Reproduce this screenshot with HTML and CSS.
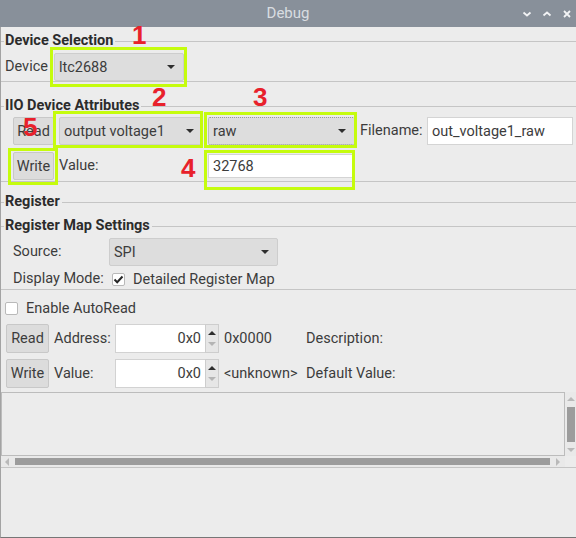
FILE: index.html
```html
<!DOCTYPE html>
<html lang="en">
<head>
<meta charset="utf-8">
<title>Debug</title>
<link rel="stylesheet" href="styles.css">
</head>
<body>
<div class="win">
  <header class="titlebar">
    <span class="title">Debug</span>
    <div class="wbtns">
      <svg viewBox="0 0 10 10" width="10" height="10"><path d="M1.5 3.5 L5 6.5 L8.5 3.5"/></svg>
      <svg viewBox="0 0 10 10" width="10" height="10"><path d="M1.5 6.5 L5 3.5 L8.5 6.5"/></svg>
      <svg viewBox="0 0 10 10" width="10" height="10"><path d="M2 2 L8 8 M8 2 L2 8"/></svg>
    </div>
  </header>

  <main class="content">
    <section class="group g-dev">
      <div class="ghead"><span>Device Selection</span></div>
      <div class="dev-row">
        <span class="lbl">Device</span>
        <div class="combo c-dev"><span>ltc2688</span><i class="caret"></i></div>
      </div>
    </section>

    <section class="group g-iio">
      <div class="ghead"><span>IIO Device Attributes</span></div>
      <div class="iio-grid">
        <button class="btn">Read</button>
        <div class="combo"><span>output voltage1</span><i class="caret"></i></div>
        <div class="combo focus"><span>raw</span><i class="caret"></i></div>
        <span class="lbl">Filename:</span>
        <div class="field">out_voltage1_raw</div>

        <button class="btn">Write</button>
        <span class="lbl">Value:</span>
        <div class="field f-val">32768</div>
      </div>
    </section>

    <section class="group g-reg">
      <div class="ghead"><span>Register</span></div>

      <section class="group g-map">
        <div class="ghead"><span>Register Map Settings</span></div>
        <div class="map-grid">
          <span class="lbl">Source:</span>
          <div class="combo c-src"><span>SPI</span><i class="caret"></i></div>
          <span class="lbl">Display Mode:</span>
          <label class="check c-detail">
            <span class="box on"><svg viewBox="0 0 13 13" width="13" height="13"><path d="M2.5 6.5 L5.2 9.2 L10.5 3.5"/></svg></span>
            <span>Detailed Register Map</span>
          </label>
        </div>
      </section>

      <label class="check c-auto">
        <span class="box"></span>
        <span>Enable AutoRead</span>
      </label>

      <div class="rw-grid">
        <button class="btn">Read</button>
        <span class="lbl">Address:</span>
        <div class="spin">
          <div class="spin-val">0x0</div>
          <div class="spin-btns"><i class="up"></i><i class="down"></i></div>
        </div>
        <span class="lbl">0x0000</span>
        <span class="lbl">Description:</span>

        <button class="btn">Write</button>
        <span class="lbl">Value:</span>
        <div class="spin">
          <div class="spin-val">0x0</div>
          <div class="spin-btns"><i class="up"></i><i class="down"></i></div>
        </div>
        <span class="lbl">&lt;unknown&gt;</span>
        <span class="lbl">Default Value:</span>
      </div>

      <div class="viewer">
        <div class="view-frame"></div>
        <div class="vscroll">
          <i class="arr-up"></i>
          <div class="vthumb"></div>
          <i class="arr-down"></i>
        </div>
        <div class="hscroll">
          <i class="arr-left"></i>
          <div class="hthumb"></div>
          <i class="arr-right"></i>
        </div>
        <div class="corner"></div>
      </div>
    </section>
  </main>

  <!-- callout markers drawn over the form -->
  <div class="hl hl-1"></div>
  <div class="hl hl-2"></div>
  <div class="hl hl-3"></div>
  <div class="hl hl-4"></div>
  <div class="hl hl-5"></div>
  <span class="num n-1">1</span>
  <span class="num n-2">2</span>
  <span class="num n-3">3</span>
  <span class="num n-4">4</span>
  <span class="num n-5">5</span>
</div>
</body>
</html>
```

FILE: styles.css
```css
* {
  box-sizing: border-box;
  margin: 0;
  padding: 0;
}

html, body {
  width: 576px;
  height: 538px;
  overflow: hidden;
}

body {
  background: #ececec;
  font-family: Roboto, "Noto Sans", sans-serif;
  font-size: 14.5px;
  color: #3c3c3c;
}

.win {
  position: relative;
  height: 538px;
  display: flex;
  flex-direction: column;
}

/* ---------- title bar ---------- */
.titlebar {
  height: 27px;
  flex: none;
  background: #88909a;
  display: grid;
  grid-template-columns: 1fr auto 1fr;
  align-items: center;
}

.title {
  grid-column: 2;
  color: #d9dde1;
  font-size: 15px;
  line-height: 27px;
}

.wbtns {
  grid-column: 3;
  justify-self: end;
  display: flex;
  gap: 10px;
  padding-right: 4px;
}

.wbtns svg {
  display: block;
}

.wbtns path {
  fill: none;
  stroke: #f2f3f5;
  stroke-width: 1.8;
}

/* ---------- window body ---------- */
.content {
  flex: 1;
  border-left: 1px solid #a3a3a3;
  border-bottom: 1px solid #767676;
}

.group {
  border-bottom: 1px solid #c5c5c5;
}

.ghead {
  display: flex;
  align-items: center;
  height: 14px;
  line-height: 14px;
  font-weight: bold;
  color: #2c2c2c;
}

.ghead::before {
  content: "";
  width: 3px;
  border-top: 1px solid #c5c5c5;
  margin-right: 1px;
}

.ghead::after {
  content: "";
  flex: 1;
  border-top: 1px solid #c5c5c5;
  margin-left: 2px;
}

.lbl {
  white-space: nowrap;
  line-height: 16px;
}

/* ---------- controls ---------- */
.combo {
  height: 28px;
  display: flex;
  align-items: center;
  padding: 0 8px 0 4px;
  background: #dddddd;
  border: 1px solid #cdcdcd;
  border-radius: 2px;
  white-space: nowrap;
}

.combo.focus {
  border: 1px dotted #9a9a9a;
}

.caret {
  margin-left: auto;
  width: 0;
  height: 0;
  border-left: 4.5px solid transparent;
  border-right: 4.5px solid transparent;
  border-top: 4.5px solid #2e2e2e;
}

.btn {
  height: 28px;
  font: inherit;
  color: #3c3c3c;
  background: #dcdcdc;
  border: 1px solid #c8c8c8;
  border-radius: 2px;
}

.field {
  height: 28px;
  display: flex;
  align-items: center;
  padding-left: 4px;
  background: #ffffff;
  border: 1px solid #d4d4d4;
  white-space: nowrap;
}

.check {
  display: flex;
  align-items: center;
  height: 14px;
}

.box {
  width: 13px;
  height: 13px;
  flex: none;
  background: #ffffff;
  border: 1px solid #b9b9b9;
  border-radius: 2px;
  display: flex;
  align-items: center;
  justify-content: center;
}

.box svg {
  display: block;
  flex: none;
}

.box path {
  fill: none;
  stroke: #262626;
  stroke-width: 2;
}

/* ---------- Device Selection ---------- */
.g-dev {
  padding: 7px 0 0;
}

.dev-row {
  margin-top: 5px;
  height: 28px;
  display: flex;
  align-items: center;
  gap: 6px;
  padding-left: 4px;
}

.c-dev {
  width: 130px;
}

/* ---------- IIO Device Attributes ---------- */
.g-iio {
  margin-top: 17px;
}

.iio-grid {
  margin-top: 3px;
  display: grid;
  grid-template-columns: 41px 144px 147px 62px 146px;
  grid-auto-rows: 30px;
  column-gap: 5px;
  row-gap: 5px;
  align-items: center;
  padding-left: 12px;
}

.f-val {
  height: 24px;
}

/* ---------- Register ---------- */
.g-reg {
  margin-top: 13px;
}

.g-map {
  margin-top: 10px;
  padding-bottom: 3px;
}

.map-grid {
  margin-top: 5px;
  display: grid;
  grid-template-columns: 91px 169px;
  grid-template-rows: 28px 14px;
  column-gap: 5px;
  row-gap: 6px;
  align-items: center;
  padding-left: 12px;
}

.c-detail {
  padding-left: 3px;
  gap: 8px;
}

.c-auto {
  margin-top: 11px;
  padding-left: 4px;
  gap: 8px;
}

.rw-grid {
  margin-top: 9px;
  display: grid;
  grid-template-columns: 43px 56px 104px 77px auto;
  grid-auto-rows: 29px;
  column-gap: 5px;
  row-gap: 6px;
  align-items: center;
  padding-left: 5px;
}

.rw-grid .btn {
  height: 29px;
}

.spin {
  height: 29px;
  display: flex;
}

.spin-val {
  flex: 1;
  background: #ffffff;
  border: 1px solid #d2d2d2;
  border-right: none;
  text-align: right;
  padding-right: 4px;
  line-height: 27px;
}

.spin-btns {
  width: 14px;
  background: #e6e6e6;
  border: 1px solid #cdcdcd;
  display: flex;
  flex-direction: column;
  justify-content: space-between;
  align-items: center;
  padding: 6px 0 6px;
}

.spin-btns i {
  width: 0;
  height: 0;
  border-left: 4px solid transparent;
  border-right: 4px solid transparent;
}

.spin-btns .up {
  border-bottom: 4px solid #2e2e2e;
}

.spin-btns .down {
  border-top: 4px solid #b4b4b4;
}

/* ---------- register map viewer ---------- */
.viewer {
  margin-top: 4px;
  display: grid;
  grid-template-columns: 564px 11px;
  grid-template-rows: 64px 11px;
}

.view-frame {
  border: 1px solid #bcbcbc;
  background: #ececec;
}

.vscroll {
  background: #e9e9e9;
  display: flex;
  flex-direction: column;
  align-items: center;
  padding: 5px 0 4px;
}

.vthumb {
  width: 8px;
  height: 35px;
  margin: 6px 0 auto;
  background: #9c9c9c;
}

.arr-up, .arr-down, .arr-left, .arr-right {
  width: 0;
  height: 0;
  flex: none;
}

.arr-up {
  border-left: 4px solid transparent;
  border-right: 4px solid transparent;
  border-bottom: 4px solid #b9b9b9;
}

.arr-down {
  border-left: 4px solid transparent;
  border-right: 4px solid transparent;
  border-top: 4px solid #b9b9b9;
}

.hscroll {
  background: #e9e9e9;
  display: flex;
  align-items: center;
  padding: 0 5px 0 4px;
}

.arr-left {
  border-top: 4px solid transparent;
  border-bottom: 4px solid transparent;
  border-right: 4px solid #b9b9b9;
}

.arr-right {
  border-top: 4px solid transparent;
  border-bottom: 4px solid transparent;
  border-left: 4px solid #b9b9b9;
}

.hthumb {
  flex: 1;
  height: 7px;
  margin: 0 6px;
  background: #9c9c9c;
}

.corner {
  background: #ececec;
}

/* ---------- callout markers ---------- */
.hl {
  position: absolute;
  border: 3px solid #c5fc0d;
}

.hl-1 { left: 50px;  top: 47px;  width: 137px; height: 40px; }
.hl-2 { left: 53px;  top: 111px; width: 150px; height: 37px; }
.hl-3 { left: 204px; top: 112px; width: 153px; height: 36px; }
.hl-4 { left: 204px; top: 150px; width: 151px; height: 40px; }
.hl-5 { left: 8px;   top: 148px; width: 50px;  height: 37px; }

.num {
  position: absolute;
  font-family: "Liberation Sans", Arial, sans-serif;
  font-weight: bold;
  font-size: 26px;
  line-height: 26px;
  color: #e8212b;
}

.n-1 { left: 132px; top: 22px; }
.n-2 { left: 152px; top: 84px; }
.n-3 { left: 253px; top: 84px; }
.n-4 { left: 181px; top: 155px; }
.n-5 { left: 23px;  top: 114px; }
```
